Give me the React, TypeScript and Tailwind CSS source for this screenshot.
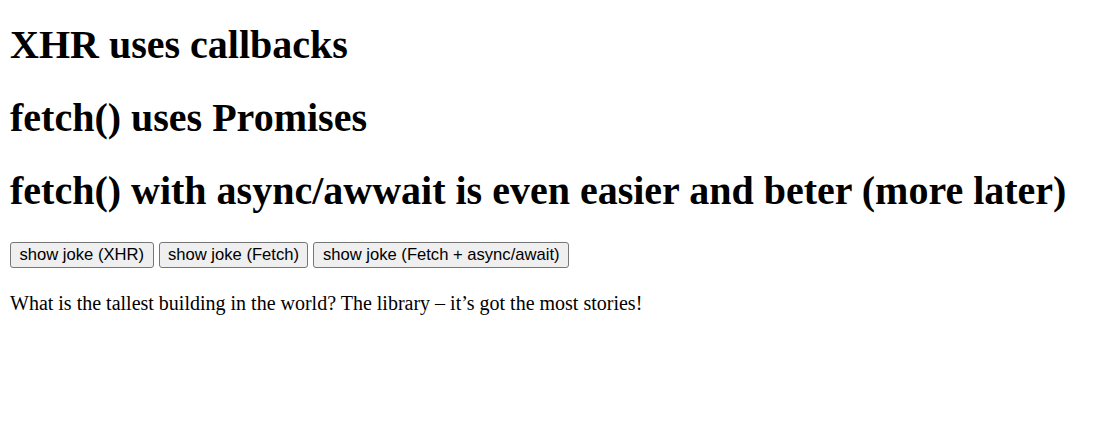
export default function App() {
  const h = "font-bold text-[40px] leading-[46px] m-0";
  const btn = "h-[26px] px-[8.5px] flex items-center border border-[#767676] rounded-[3px] bg-[#efefef] text-[16.6px] leading-[19px] text-black font-['Liberation_Sans',Arial,sans-serif]";
  return (
    <div className="pt-[22px] px-[10px] font-['Liberation_Serif','Times_New_Roman',serif] text-black bg-white min-h-[442px]">
      <div className="flex flex-col gap-[27px]">
        <h1 className={h}>XHR uses callbacks</h1>
        <h1 className={h}>fetch() uses Promises</h1>
        <h1 className={h}>fetch() with async/awwait is even easier and beter (more later)</h1>
      </div>
      <div className="flex gap-[5px] mt-[27.5px]">
        <button className={btn}>show joke (XHR)</button>
        <button className={btn}>show joke (Fetch)</button>
        <button className={btn}>show joke (Fetch + async/await)</button>
      </div>
      <p className="text-[20px] leading-[23px] mt-[24px]">What is the tallest building in the world? The library – it’s got the most stories!</p>
    </div>
  );
}
